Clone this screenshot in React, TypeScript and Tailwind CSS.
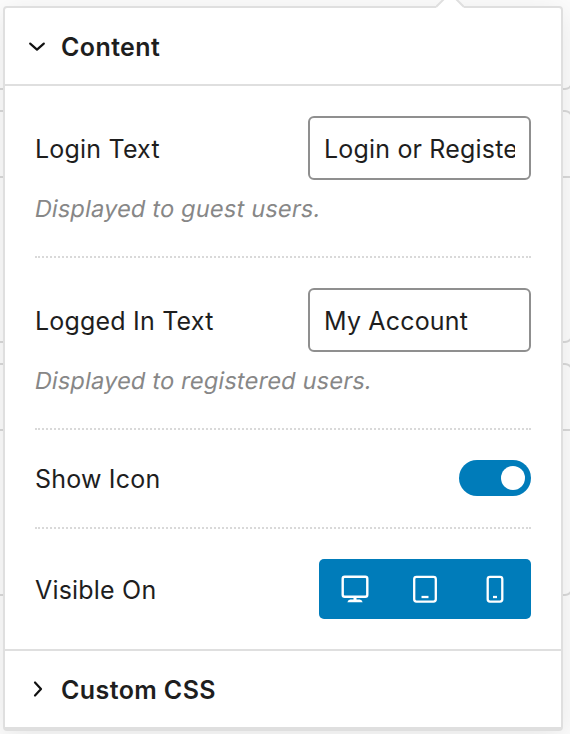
import type { ReactNode } from 'react';

function SectionHeader({ title, open }: { title: string; open: boolean }) {
  return (
    <div className="flex h-[76px] items-center pl-[22px]">
      <svg width="20" height="20" viewBox="0 0 20 20" fill="none" stroke="#111" strokeWidth="2.200" strokeLinecap="round" strokeLinejoin="round">
        {open ? <path d="M3.200 7.600L10 13.600l6.800-6" /> : <path d="M8 3.500l6 6.500L8 16.500" />}
      </svg>
      <h2 className="ml-[14px] whitespace-nowrap pt-[2px] text-[25px] font-semibold leading-8 tracking-[0.4px]">{title}</h2>
    </div>
  );
}

function Row({ label, children }: { label: string; children: ReactNode }) {
  return (
    <div className="flex items-center justify-between">
      <span className="whitespace-nowrap pt-[1px] text-[25px] leading-8 tracking-[0.2px]">{label}</span>
      {children}
    </div>
  );
}

function TextField({ value }: { value: string }) {
  return (
    <div className="h-16 w-[223px] rounded-[6px] border-2 border-[#8f8f8f] px-[14px]">
      <div className="overflow-hidden whitespace-nowrap text-[25px] leading-[62px] tracking-[0.18px]">{value}</div>
    </div>
  );
}

function Hint({ children }: { children: ReactNode }) {
  return (
    <p className="-ml-px mt-[13px] origin-[0_22px] -skew-x-[10deg] whitespace-nowrap text-[23.5px] leading-8 tracking-[0.22px] text-[#878787]">{children}</p>
  );
}

function DeviceButtons() {
  return (
    <div className="grid h-[60px] w-[212px] grid-cols-[70px_70px_70px] items-center justify-items-center justify-center rounded-[5px] bg-[#007cba] text-white">
      <svg width="28" height="28" viewBox="0 0 28 28" fill="none" stroke="currentColor" strokeWidth="2.4">
        <rect x="1.7" y="1.7" width="24.6" height="20" rx="2" />
        <path d="M12.500 22.500h3v2h3.200q2.200.2 3 2.800H6.300q.8-2.600 3-2.800h3.200z" fill="currentColor" stroke="none" />
      </svg>
      <svg width="28" height="28" viewBox="0 0 28 28" fill="none" stroke="currentColor" strokeWidth="2.3">
        <rect x="3.200" y="1.800" width="21.600" height="24.800" rx="2.300" />
        <path d="M10.500 22h7" />
      </svg>
      <svg width="28" height="28" viewBox="0 0 28 28" fill="none" stroke="currentColor" strokeWidth="2.3">
        <rect x="6.700" y="1.800" width="14.600" height="24.800" rx="2.300" />
        <path d="M12 22h4" />
      </svg>
    </div>
  );
}

export default function App() {
  return (
    <div className="relative h-[734px] w-[570px] overflow-hidden bg-[#fcfcfc] font-[Inter,sans-serif] text-[#1e1e1e]">
      <div className="absolute -left-5 right-[-3px] top-0 flex flex-col gap-5">
        <div className="h-[90px] rounded-b-lg border-x-2 border-b-2 border-[#d9d9d9]" />
        <div className="h-[233px] rounded-lg border-2 border-[#d9d9d9]">
          <div className="h-[66px] border-b-2 border-[#d9d9d9]" />
        </div>
        <div className="h-[233px] rounded-lg border-2 border-[#d9d9d9]">
          <div className="h-[66px] border-b-2 border-[#d9d9d9]" />
        </div>
      </div>

      <div className="relative ml-[3px] mt-[6px] h-[725px] w-[560px] rounded-[4px] border-2 border-b-4 border-[#dfdfdf] bg-white shadow-[0_6px_30px_rgba(0,0,0,0.09)]">
        <svg className="absolute left-[431px] top-[-8px]" width="28" height="9" viewBox="0 0 28 9">
          <path d="M0 9V7L7 0h14l7 7v2z" fill="white" />
          <path d="M0 7L8 -1M28 7L20 -1" stroke="#dfdfdf" strokeWidth="2" />
        </svg>
        <SectionHeader title="Content" open />
        <div className="border-y-2 border-[#dfdfdf] px-[30px]">
          <div className="h-[172px] border-b-2 border-dotted border-[#d9d9d9] pt-[30px]">
            <Row label="Login Text">
              <TextField value="Login or Register" />
            </Row>
            <Hint>Displayed to guest users.</Hint>
          </div>
          <div className="h-[172px] border-b-2 border-dotted border-[#d9d9d9] pt-[30px]">
            <Row label="Logged In Text">
              <TextField value="My Account" />
            </Row>
            <Hint>Displayed to registered users.</Hint>
          </div>
          <div className="h-[99px] border-b-2 border-dotted border-[#d9d9d9] pt-[30px]">
            <Row label="Show Icon">
              <div className="flex h-9 w-[72px] items-center justify-end rounded-full bg-[#007cba] pr-[6px]">
                <div className="size-6 rounded-full bg-white" />
              </div>
            </Row>
          </div>
          <div className="h-[120px] pt-[30px]">
            <Row label="Visible On">
              <DeviceButtons />
            </Row>
          </div>
        </div>
        <SectionHeader title="Custom CSS" open={false} />
      </div>
    </div>
  );
}
